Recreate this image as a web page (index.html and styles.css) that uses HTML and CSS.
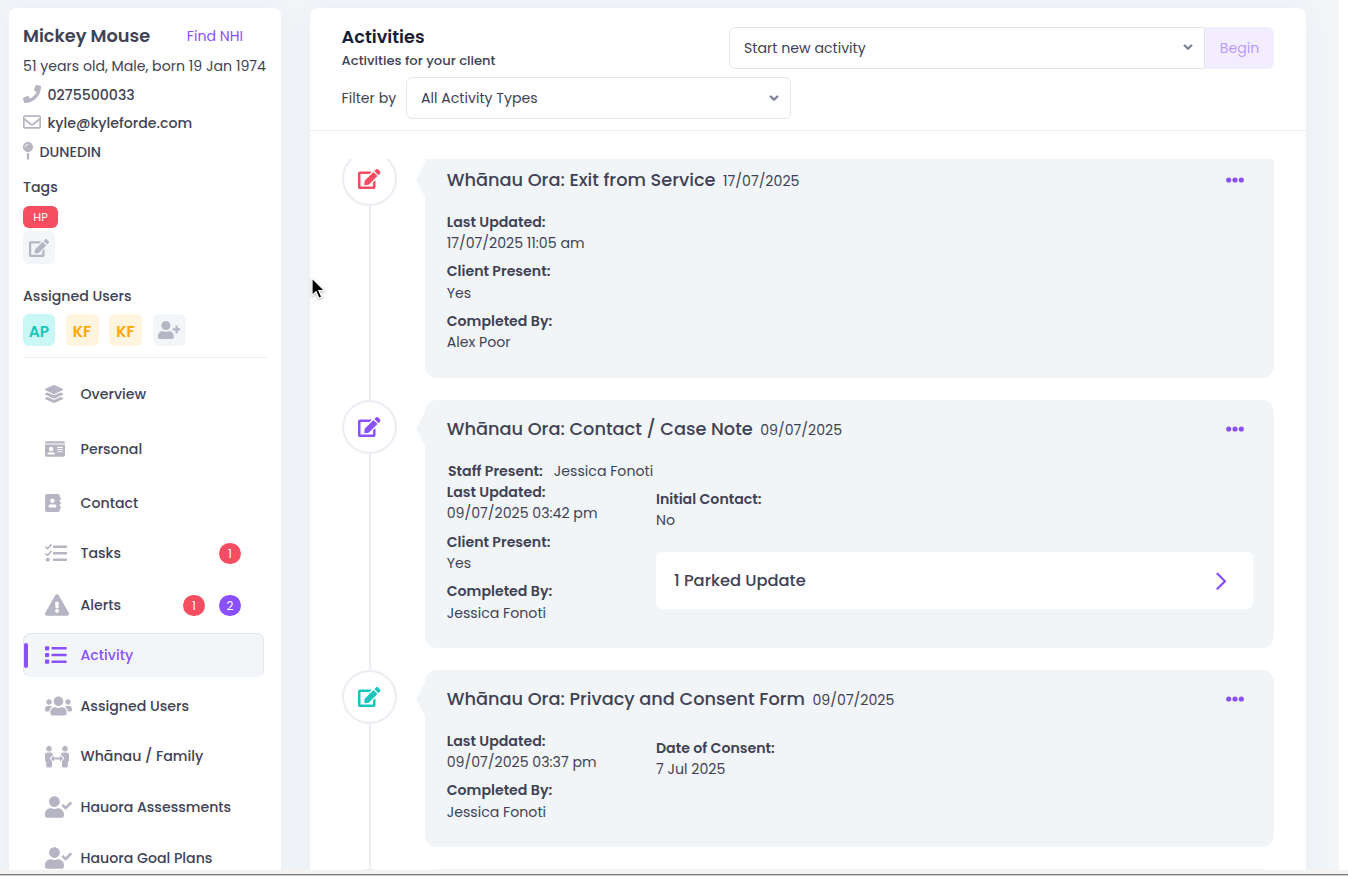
FILE: index.html
```html
<!DOCTYPE html>
<html lang="en">
<head>
<meta charset="utf-8">
<title>Client activities</title>
<link rel="stylesheet" href="styles.css">
</head>
<body>
<svg class="defs" aria-hidden="true">
  <symbol id="edit" viewBox="0 0 576 512"><path d="M402.6 83.2l90.2 90.2c3.8 3.8 3.8 10 0 13.8L274.4 405.6l-92.8 10.3c-12.4 1.4-22.9-9.1-21.5-21.5l10.3-92.8L388.8 83.2c3.8-3.8 10-3.8 13.8 0zm162-22.9l-48.8-48.8c-15.2-15.2-39.9-15.2-55.2 0l-35.4 35.4c-3.8 3.8-3.8 10 0 13.8l90.2 90.2c3.8 3.8 10 3.8 13.8 0l35.4-35.4c15.2-15.3 15.2-40 0-55.2zM384 346.2V448H64V128h229.8c3.2 0 6.2-1.3 8.5-3.5l40-40c7.6-7.6 2.2-20.5-8.5-20.5H48C21.5 64 0 85.5 0 112v352c0 26.5 21.5 48 48 48h352c26.5 0 48-21.5 48-48V306.2c0-10.7-12.9-16-20.5-8.5l-40 40c-2.2 2.3-3.5 5.3-3.5 8.5z"/></symbol>
  <symbol id="usercheck" viewBox="0 0 640 512"><path d="M224 256c70.7 0 128-57.3 128-128S294.7 0 224 0 96 57.3 96 128s57.3 128 128 128zm89.6 32h-16.7c-22.2 10.2-46.9 16-72.9 16s-50.6-5.8-72.9-16h-16.7C60.2 288 0 348.2 0 422.4V464c0 26.5 21.5 48 48 48h352c26.5 0 48-21.5 48-48v-41.6c0-74.2-60.2-134.4-134.4-134.4zm323-128.4l-27.8-28.1c-4.6-4.7-12.1-4.7-16.8-.1l-104.8 104-45.5-45.8c-4.6-4.7-12.1-4.7-16.8-.1l-28.1 27.9c-4.7 4.6-4.7 12.1-.1 16.8l81.7 82.3c4.6 4.7 12.1 4.7 16.8.1l141.3-140.2c4.6-4.7 4.7-12.2.1-16.8z"/></symbol>
  <symbol id="dots" viewBox="0 0 18 6"><circle cx="2.7" cy="3" r="2.6"/><circle cx="9" cy="3" r="2.6"/><circle cx="15.3" cy="3" r="2.6"/></symbol>
  <symbol id="chev" viewBox="0 0 10 7"><path d="M1.7 1.5 5 4.800l3.300-3.300" fill="none" stroke="#7e8299" stroke-width="2.300" stroke-linecap="round" stroke-linejoin="round"/></symbol>
</svg>
<div class="app">
  <aside class="sidebar">
    <div class="namerow"><h1 class="name">Mickey Mouse</h1><a class="nhi">Find NHI</a></div>
    <div class="age">51 years old, Male, born 19 Jan 1974</div>
    <div class="info"><svg class="i-phone" viewBox="0 0 512 512"><path d="M493.4 24.6l-104-24c-11.3-2.6-22.9 3.3-27.5 13.9l-48 112c-4.2 9.8-1.4 21.3 6.9 28l60.6 49.6c-36 76.7-98.9 140.5-177.2 177.2l-49.6-60.6c-6.8-8.3-18.2-11.1-28-6.9l-112 48C3.9 366.5-2 378.1.6 389.4l24 104C27.1 504.2 36.7 512 48 512c256.1 0 464-207.5 464-464 0-11.2-7.7-20.9-18.6-23.4z"/></svg><span>0275500033</span></div>
    <div class="info"><svg class="i-phone" viewBox="0 0 512 512"><path d="M464 64H48C21.49 64 0 85.49 0 112v288c0 26.51 21.49 48 48 48h416c26.51 0 48-21.49 48-48V112c0-26.51-21.49-48-48-48zm0 48v40.805c-22.422 18.259-58.168 46.651-134.587 106.49-16.841 13.247-50.201 45.072-73.413 44.701-23.208.375-56.579-31.459-73.413-44.701C106.18 199.465 70.425 171.067 48 152.805V112h416zM48 400V214.398c22.914 18.251 55.409 43.862 104.938 82.646 21.857 17.205 60.134 55.186 103.062 54.955 42.717.231 80.509-37.199 103.053-54.947 49.528-38.783 82.032-64.401 104.947-82.653V400H48z"/></svg><span>kyle@kyleforde.com</span></div>
    <div class="info town"><svg class="i-pin" viewBox="0 0 288 512"><path d="M112 316.94v156.69l22.02 33.02c4.75 7.12 15.22 7.12 19.97 0L176 473.63V316.94c-10.39 1.92-21.06 3.06-32 3.06s-21.61-1.14-32-3.06zM144 0C64.47 0 0 64.47 0 144s64.47 144 144 144 144-64.47 144-144S223.53 0 144 0zm0 76c-37.5 0-68 30.5-68 68 0 6.62-5.38 12-12 12s-12-5.38-12-12c0-50.73 41.28-92 92-92 6.62 0 12 5.38 12 12s-5.38 12-12 12z"/></svg><span>DUNEDIN</span></div>
    <div class="sec tags">Tags</div>
    <div class="tag">HP</div>
    <div class="sq editbtn"><svg width="20" height="18"><use href="#edit"/></svg></div>
    <div class="sec users">Assigned Users</div>
    <div class="avatars">
      <div class="sq teal">AP</div><div class="sq amber">KF</div><div class="sq amber">KF</div>
      <div class="sq"><svg width="22.5" height="18" viewBox="0 0 640 512"><path d="M224 256c70.7 0 128-57.3 128-128S294.7 0 224 0 96 57.3 96 128s57.3 128 128 128zm89.6 32h-16.7c-22.2 10.2-46.9 16-72.9 16s-50.6-5.8-72.9-16h-16.7C60.2 288 0 348.2 0 422.4V464c0 26.5 21.5 48 48 48h352c26.5 0 48-21.5 48-48v-41.6c0-74.2-60.2-134.4-134.4-134.4z"/><rect x="496" y="128" width="64" height="224" rx="16"/><rect x="416" y="208" width="224" height="64" rx="16"/></svg></div>
    </div>
    <nav class="nav">
      <a class="item h52"><svg class="ic w18" viewBox="0 0 512 512"><path d="M12.41 148.02l232.94 105.67c6.8 3.09 14.49 3.09 21.29 0l232.94-105.67c16.55-7.51 16.55-32.52 0-40.03L266.65 2.31a25.607 25.607 0 0 0-21.29 0L12.41 107.98c-16.55 7.51-16.55 32.53 0 40.04zm487.18 88.28l-58.09-26.33-161.64 73.27c-7.56 3.43-15.59 5.17-23.86 5.17s-16.29-1.74-23.86-5.17L70.51 209.97l-58.1 26.33c-16.55 7.5-16.55 32.5 0 40l232.94 105.59c6.8 3.08 14.49 3.08 21.29 0L499.59 276.3c16.55-7.5 16.55-32.5 0-40zm0 127.8l-57.87-26.23-161.86 73.37c-7.56 3.43-15.59 5.17-23.86 5.17s-16.29-1.74-23.86-5.17L70.29 337.87 12.41 364.1c-16.55 7.5-16.55 32.5 0 40l232.94 105.59c6.8 3.08 14.49 3.08 21.29 0L499.59 404.1c16.55-7.5 16.55-32.5 0-40z"/></svg><span class="lb">Overview</span></a>
      <a class="item h58"><svg class="ic w20" viewBox="0 0 576 512"><path fill-rule="evenodd" d="M528 32H48C21.5 32 0 53.5 0 80v16h576V80c0-26.5-21.5-48-48-48zM0 432c0 26.5 21.5 48 48 48h480c26.5 0 48-21.5 48-48V128H0v304zM352 192h160v32H352zM352 256h160v32H352zM352 320h160v32H352zM176 192c35.3 0 64 28.7 64 64s-28.7 64-64 64-64-28.7-64-64 28.7-64 64-64zM67.1 396.2C75.5 370.5 99.6 352 128 352h8.2c12.3 5.1 25.7 8 39.8 8s27.6-2.9 39.8-8h8.2c28.4 0 52.5 18.5 60.9 44.2 3.2 9.9-5.2 19.8-15.6 19.8H82.7c-10.4 0-18.8-10-15.6-19.8z"/></svg><span class="lb">Personal</span></a>
      <a class="item h50"><svg class="ic w16" viewBox="0 0 448 512"><path d="M436 160c6.6 0 12-5.4 12-12v-40c0-6.6-5.4-12-12-12h-20V48c0-26.5-21.5-48-48-48H48C21.5 0 0 21.5 0 48v416c0 26.5 21.5 48 48 48h320c26.5 0 48-21.5 48-48v-48h20c6.6 0 12-5.4 12-12v-40c0-6.6-5.4-12-12-12h-20v-64h20c6.6 0 12-5.4 12-12v-40c0-6.6-5.4-12-12-12h-20v-64h20zm-228-32c35.3 0 64 28.7 64 64s-28.7 64-64 64-64-28.7-64-64 28.7-64 64-64zm112 236.8c0 10.6-10 19.2-22.4 19.2H118.4C106 384 96 375.4 96 364.8v-19.2c0-31.8 30.1-57.6 67.2-57.6h5c12.3 5.1 25.7 8 39.8 8s27.6-2.9 39.8-8h5c37.1 0 67.2 25.8 67.2 57.6v19.2z"/></svg><span class="lb">Contact</span></a>
      <a class="item h50"><svg class="ic w22" viewBox="0 0 22 18"><rect x="8" y="1.500" width="14" height="2.600" rx=".7"/><rect x="8" y="8" width="14" height="2.600" rx=".7"/><rect x="8" y="14.500" width="14" height="2.600" rx=".7"/><circle cx="2.800" cy="15.800" r="2"/><path d="M.9 3.200l1.700 1.500L6 .9M.9 9.800l1.700 1.500L6 7.500" fill="none" stroke="#b5b5c3" stroke-width="1.700" stroke-linecap="round" stroke-linejoin="round"/></svg><span class="lb">Tasks</span><b class="bd">1</b></a>
      <a class="item h54"><svg class="ic w24" viewBox="0 0 576 512"><path d="M569.517 440.013C587.975 472.007 564.806 512 527.94 512H48.054c-36.937 0-59.999-40.055-41.577-71.987L246.423 23.985c18.467-32.009 64.72-31.951 83.154 0l239.94 416.028zM288 354c-25.405 0-46 20.595-46 46s20.595 46 46 46 46-20.595 46-46-20.595-46-46-46zm-43.673-165.346l7.418 136c.347 6.364 5.609 11.346 11.982 11.346h48.546c6.373 0 11.635-4.982 11.982-11.346l7.418-136c.375-6.874-5.098-12.654-11.982-12.654h-63.383c-6.884 0-12.356 5.78-11.981 12.654z"/></svg><span class="lb">Alerts</span><b class="bd">1</b><b class="bd violet">2</b></a>
      <a class="item active"><svg class="ic w22" viewBox="0 0 22 18"><rect x="0" y=".2" width="4.200" height="4.200" rx=".8"/><rect x="0" y="6.900" width="4.200" height="4.200" rx=".8"/><rect x="0" y="13.600" width="4.200" height="4.200" rx=".8"/><rect x="6.600" y="1" width="15" height="2.600" rx=".6"/><rect x="6.600" y="7.700" width="15" height="2.600" rx=".6"/><rect x="6.600" y="14.400" width="15" height="2.600" rx=".6"/></svg><span class="lb">Activity</span></a>
      <a class="item h52"><svg class="ic w27" viewBox="0 0 640 512"><path d="M96 224c35.3 0 64-28.7 64-64s-28.7-64-64-64-64 28.7-64 64 28.7 64 64 64zm448 0c35.3 0 64-28.7 64-64s-28.7-64-64-64-64 28.7-64 64 28.7 64 64 64zm32 32h-64c-17.6 0-33.5 7.1-45.1 18.6 40.3 22.1 68.9 62 75.1 109.4h66c17.7 0 32-14.3 32-32v-32c0-35.3-28.7-64-64-64zm-256 0c61.9 0 112-50.1 112-112S381.9 32 320 32 208 82.1 208 144s50.1 112 112 112zm76.8 32h-8.3c-20.8 10-43.9 16-68.5 16s-47.6-6-68.5-16h-8.3C179.6 288 128 339.6 128 403.2V432c0 26.5 21.5 48 48 48h288c26.5 0 48-21.5 48-48v-28.8c0-63.6-51.6-115.2-115.2-115.2zm-223.7-13.4C161.5 263.1 145.6 256 128 256H64c-35.3 0-64 28.7-64 64v32c0 17.7 14.3 32 32 32h65.9c6.3-47.4 34.9-87.3 75.2-109.4z"/></svg><span class="lb">Assigned Users</span></a>
      <a class="item h49"><svg class="ic w24" viewBox="0 0 24 22"><circle cx="4" cy="2.800" r="2.700"/><circle cx="20" cy="2.800" r="2.700"/><path d="M2.500 6.500h3c1.600 0 2.500 1 2.500 2.300L4.600 12.300 7 15.200V20c0 1-.6 1.600-1.500 1.600H2.600c-.9 0-1.400-.6-1.400-1.500v-4C.4 15.700 0 15.200 0 14.500V9c0-1.500 1-2.500 2.500-2.500zM21.500 6.500h-3c-1.600 0-2.500 1-2.500 2.300l3.400 3.500-2.400 2.900V20c0 1 .6 1.600 1.500 1.600h2.900c.9 0 1.400-.6 1.400-1.500v-4c.8-.4 1.200-.9 1.200-1.600V9c0-1.500-1-2.500-2.500-2.500z"/><path d="M5.700 12.600L9 9.400v2.200h6V9.400l3.300 3.200-3.300 3.100v-2.100H9v2.100z"/></svg><span class="lb">Whānau / Family</span></a>
      <a class="item h52"><svg class="ic w27"><use href="#usercheck"/></svg><span class="lb">Hauora Assessments</span></a>
      <a class="item h50"><svg class="ic w27"><use href="#usercheck"/></svg><span class="lb">Hauora Goal Plans</span></a>
    </nav>
  </aside>
  <main class="main">
    <header class="head">
      <div class="toprow">
        <div><h2 class="title">Activities</h2><p class="sub">Activities for your client</p></div>
        <div class="start"><div class="select"><span>Start new activity</span><svg class="up" width="10" height="7"><use href="#chev"/></svg></div><button class="begin">Begin</button></div>
      </div>
      <div class="filter"><span>Filter by</span><div class="select types"><span>All Activity Types</span><svg width="10" height="7"><use href="#chev"/></svg></div></div>
    </header>
    <section class="scroll">
      <div class="timeline">
        <article class="entry">
          <div class="dot first red"><svg width="22.500" height="20"><use href="#edit"/></svg></div>
          <div class="card c1">
            <div class="chead"><span class="ct">Whānau Ora: Exit from Service</span><span class="cd">17/07/2025</span><svg class="more"><use href="#dots"/></svg></div>
            <dl class="facts"><dt>Last Updated:</dt><dd>17/07/2025 11:05 am</dd><dt>Client Present:</dt><dd>Yes</dd><dt>Completed By:</dt><dd>Alex Poor</dd></dl>
          </div>
        </article>
        <article class="entry">
          <div class="dot purple"><svg width="22.500" height="20"><use href="#edit"/></svg></div>
          <div class="card c2">
            <div class="chead"><span class="ct">Whānau Ora: Contact / Case Note</span><span class="cd">09/07/2025</span><svg class="more"><use href="#dots"/></svg></div>
            <div class="staff"><b>Staff Present:</b><span>Jessica Fonoti</span></div>
            <div class="cols">
              <dl class="facts"><dt>Last Updated:</dt><dd>09/07/2025 03:42 pm</dd><dt>Client Present:</dt><dd>Yes</dd><dt>Completed By:</dt><dd>Jessica Fonoti</dd></dl>
              <div class="right"><dl class="facts"><dt>Initial Contact:</dt><dd>No</dd></dl>
                <div class="parked"><span>1 Parked Update</span><svg width="12" height="18" viewBox="0 0 12 18"><path d="M2.500 1.800 10 9.200 2.500 16.600" fill="none" stroke="#8950fc" stroke-width="2.300" stroke-linecap="round" stroke-linejoin="round"/></svg></div></div>
            </div>
          </div>
        </article>
        <article class="entry">
          <div class="dot green"><svg width="22.500" height="20"><use href="#edit"/></svg></div>
          <div class="card c3">
            <div class="chead"><span class="ct">Whānau Ora: Privacy and Consent Form</span><span class="cd">09/07/2025</span><svg class="more"><use href="#dots"/></svg></div>
            <div class="cols">
              <dl class="facts"><dt>Last Updated:</dt><dd>09/07/2025 03:37 pm</dd><dt>Completed By:</dt><dd>Jessica Fonoti</dd></dl>
              <div class="right"><dl class="facts"><dt>Date of Consent:</dt><dd>7 Jul 2025</dd></dl></div>
            </div>
          </div>
        </article>
        <article class="entry"><div class="dot"></div><div class="card c4"></div></article>
      </div>
    </section>
  </main>
  <svg class="cursor" viewBox="0 0 15 23"><path d="M1 1v17.500l4-3.800 2.900 6.600 2.900-1.300-2.900-6.300h5.600z" fill="#000" stroke="#fff" stroke-width="1.200"/></svg>
</div>
<div class="strip"></div>
</body>
</html>
```
FILE: styles.css
```css
* { box-sizing: border-box; }
body { margin: 0; width: 1348px; height: 876px; overflow: hidden; background: #fff; color: #3f4254; font: 400 14.150px/21px Poppins, Inter, "Noto Sans", sans-serif; white-space: nowrap; }
h1, h2, p, dl, dd { margin: 0; }
svg { display: block; flex: none; fill: currentColor; }
.defs { display: none; }
.app { position: relative; width: 1339px; height: 870px; padding: 8px 33px 0 9px; display: flex; gap: 29px; overflow: hidden; background: #f2f6f9; }
.sidebar { width: 272px; height: 880px; padding: 13px 14px 0; background: #fff; border-radius: 8px; box-shadow: 0 0 30px rgba(82, 63, 105, .05); flex: none; }
.namerow { height: 30px; display: flex; justify-content: space-between; align-items: center; padding-right: 24px; }
.name { font-size: 17.700px; line-height: 1.5; font-weight: 600; }
.nhi { color: #8950fc; }
.age { height: 30px; line-height: 30px; }
.info { height: 28px; display: flex; align-items: center; gap: 6.500px; font-weight: 500; }
.info svg { color: #b5b5c3; margin-top: -3px; }
.i-phone { width: 18px; height: 18px; }
.i-pin { width: 10px; height: 18px; }
.info.town { height: 30px; }
.sec { display: flex; align-items: center; font-weight: 500; }
.tags { height: 39px; padding-top: 1px; }
.users { height: 36px; margin-top: 14px; }
.tag { width: 35px; height: 22px; border-radius: 6px; background: #f64e60; color: #fff; font-size: 11.300px; line-height: 22px; text-align: center; }
.sq { width: 33px; height: 32px; border-radius: 6px; background: #f3f6f9; color: #b5b5c3; display: flex; align-items: center; justify-content: center; font-size: 15.400px; line-height: 23px; font-weight: 600; }
.editbtn { width: 32px; height: 33px; margin-top: 3px; }
.avatars { display: flex; gap: 10.500px; height: 44px; border-bottom: 1px solid #ebedf3; }
.sq.teal { background: #c9f7f5; color: #1bc5bd; width: 32px; padding-top: 2px; }
.sq.amber { background: #fff4de; color: #ffa800; padding-top: 2px; }
.nav { padding-top: 10px; }
.item { display: flex; align-items: center; padding: 0 23px 0 22px; width: 241px; color: #3f4254; font-weight: 500; }
.h49 { height: 49px; }
.h50 { height: 50px; }
.h52 { height: 52px; }
.h54 { height: 54px; }
.h58 { height: 58px; }
.ic { color: #b5b5c3; }
.w16 { width: 16px; height: 18px; margin-right: 19.500px; }
.w18 { width: 18px; height: 18px; margin-right: 17.500px; }
.w20 { width: 20px; height: 18px; margin-right: 15.500px; }
.w22 { width: 22px; height: 18px; margin-right: 13.500px; }
.w24 { width: 24px; height: 22px; margin-right: 11.500px; }
.w27 { width: 27px; height: 22px; margin-right: 8.500px; }
.lb { flex: 1; }
.bd { width: 22px; height: 21px; border-radius: 11px; margin-left: 14px; background: #f64e60; color: #fff; font-weight: 400; font-size: 12px; line-height: 21px; text-align: center; }
.bd.violet { background: #8950fc; }
.active { position: relative; height: 44px; margin: 1px 0 3px; padding-left: 21px; background: #f3f6f9; border: 1px solid #e4e6ef; border-bottom-color: #f3f6f9; border-radius: 7px; color: #8950fc; }
.active::before { content: ""; position: absolute; left: 0; top: 9px; width: 4px; height: 25px; border-radius: 2px; background: #8950fc; }
.active .ic { color: #8950fc; }
.main { width: 996px; height: 880px; background: #fff; border-radius: 8px; box-shadow: 0 0 30px rgba(82, 63, 105, .05); flex: none; }
.head { height: 123px; padding: 19px 32px 0 31.600px; border-bottom: 1px solid #ebedf3; }
.toprow { height: 50px; display: flex; justify-content: space-between; }
.title { font-size: 17.700px; line-height: 20px; font-weight: 600; color: #181c32; }
.sub { font-size: 13.150px; line-height: 20px; margin-top: 4px; font-weight: 500; }
.start { display: flex; height: 42px; }
.select { width: 476px; height: 42px; border: 1px solid #e4e6ef; border-radius: 6px 0 0 6px; padding: 0 11px 0 14px; display: flex; justify-content: space-between; align-items: center; }
.up { margin-top: -2px; }
.begin { width: 69px; border: 0; border-radius: 0 6px 6px 0; background: #f3eeff; color: #bb9afd; font: inherit; padding: 0; }
.filter { display: flex; align-items: center; justify-content: space-between; width: 449.400px; }
.types { width: 385px; border-radius: 6px; }
.scroll { margin-top: 28px; height: 711px; overflow: hidden; padding: 0 32px; }
.timeline { margin-top: -8px; background: linear-gradient(#ebedf3, #ebedf3) 27px 0 / 2px 100% no-repeat; }
.entry { display: flex; gap: 28px; padding-bottom: 22px; }
.dot { width: 55px; height: 54px; border: 2px solid #ebedf3; border-radius: 50%; background: #fff; display: flex; align-items: center; justify-content: center; flex: none; }
.first { height: 55px; }
.red { color: #f64e60; }
.purple { color: #8950fc; }
.green { color: #1bc5bd; }
.card { position: relative; width: 849px; background: #f1f5f8; border-radius: 12px; padding: 15px 21px 0 21.700px; }
.card::before { content: ""; position: absolute; left: -9px; top: 12px; border: solid transparent; border-width: 17px 9px 17px 0; border-right-color: #f1f5f8; }
.c1 { height: 227px; }
.c2 { height: 248px; }
.c3 { height: 177px; }
.c4 { height: 100px; }
.chead { display: flex; height: 28px; align-items: center; margin-bottom: 17.750px; }
.ct { font-size: 17.750px; line-height: 1.5; font-weight: 500; }
.cd { margin-left: 7.500px; padding-top: 3px; }
.more { width: 18px; height: 6px; color: #8950fc; margin: 0 9px 0 auto; }
.facts { line-height: 21.300px; }
.facts dt { font-weight: 600; }
.facts dd { margin-bottom: 7.100px; }
.staff { line-height: 21.300px; padding-left: 1.300px; display: flex; gap: 11px; }
.staff b { font-weight: 600; }
.cols { display: grid; grid-template-columns: 209.300px 597px; }
.right { padding-top: 7px; }
.parked { margin-top: 20.500px; height: 57px; background: #fff; border-radius: 6px; display: flex; align-items: center; justify-content: space-between; padding: 1px 26px 0 18px; font-size: 16.300px; line-height: 24px; font-weight: 500; }
.cursor { position: absolute; left: 311px; top: 277px; width: 15px; height: 23px; filter: drop-shadow(0 1px 1px rgba(0, 0, 0, .3)); }
.strip { width: 1348px; height: 6px; background: #f4f3f1; border-bottom: 1px solid #d0d0d0; box-shadow: inset 0 -1px #777; }
```
